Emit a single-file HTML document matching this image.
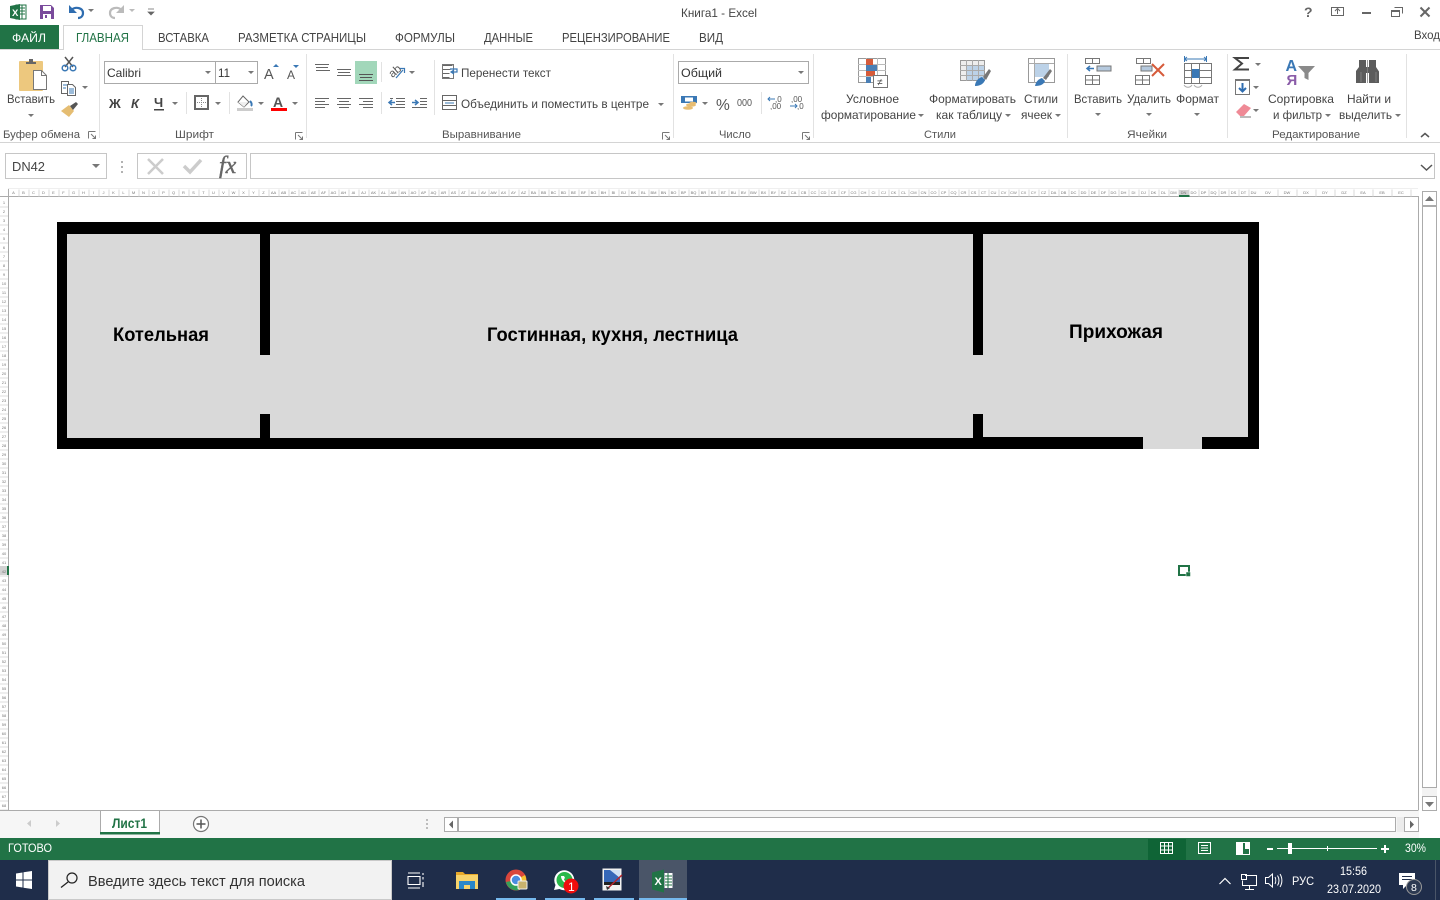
<!DOCTYPE html>
<html lang="ru"><head><meta charset="utf-8"><title>Книга1 - Excel</title>
<style>
html,body{margin:0;padding:0;width:1440px;height:900px;overflow:hidden;background:#fff}
svg{position:absolute;left:0;top:0}
text{font-family:"Liberation Sans","Noto Sans CJK SC",sans-serif;fill:#444;font-size:12px}
.t{font-size:12.5px}
.lab{font-size:11px;fill:#555}
.w{fill:#fff}
.flr{font-size:19px;font-weight:bold;fill:#000}
#cols,#rows{position:absolute;font:4px "Liberation Sans",sans-serif;color:#777}
#cols{left:8.5px;top:190px;display:flex;height:6px;line-height:6px}
#cols i{font-style:normal;width:10px;text-align:center;flex:none}
#cols u{text-decoration:none;text-align:center;flex:none;width:19px}
#rows{left:0;top:197.5px;width:8px;text-align:center}
#rows b{display:block;font-weight:normal;height:9px;line-height:9px}
</style></head><body>
<svg width="1440" height="900" viewBox="0 0 1440 900" xmlns="http://www.w3.org/2000/svg">
<defs><path id="c" d="M0 0h6l-3 3z" fill="#777"/>
<g id="l"><path d="M.5.5h7M.5.5v7M3 3l4.500 4.500M7.500 4.500v3h-3" fill="none" stroke="#777" stroke-width="1"/></g></defs>
<rect width="1440" height="900" fill="#fff"/>

<!-- QAT -->
<rect x="16" y="5" width="10" height="14" fill="#fff" stroke="#217346"/><path d="M20 8h5M20 11h5M20 14h5M22 5v14" stroke="#217346"/>
<path d="M10 6l10-2v16l-10-2z" fill="#217346"/><text x="12" y="16" style="font-size:9.500px;font-weight:bold;fill:#fff">X</text>
<path d="M40 5h11l3 3v11H40z" fill="#7a4b9c"/><rect x="43" y="6" width="8" height="5" fill="#fff"/><rect x="43" y="14" width="8" height="5" fill="#fff"/><rect x="45" y="15" width="2" height="3" fill="#7a4b9c"/>
<path d="M71 10c5-4 12-2 12 3 0 3-2 5-5 5" fill="none" stroke="#2f6db0" stroke-width="2.200"/><path d="M69 5v8h8z" fill="#2f6db0"/>
<use href="#c" x="88" y="9"/>
<path d="M122 10c-5-4-12-2-12 3 0 3 2 5 5 5" fill="none" stroke="#bbb" stroke-width="2.200"/><path d="M124 5v8h-8z" fill="#bbb"/>
<use href="#c" x="129" y="9" opacity=".5"/>
<path d="M148 9h6M148 12h6l-3 3z" fill="#666" stroke="#666" stroke-width=".7"/>
<text x="681" y="17" textLength="76" lengthAdjust="spacingAndGlyphs">Книга1 - Excel</text>
<text x="1304" y="17" style="font-size:14px;font-weight:bold;fill:#666">?</text>
<rect x="1331.500" y="7.500" width="12" height="8" fill="none" stroke="#666"/><path d="M1337.500 14V9.500M1335 11l2.500-2.500 2.500 2.500" fill="none" stroke="#666"/>
<rect x="1362" y="12" width="9" height="2" fill="#666"/>
<path d="M1394.500 7.500h8v6M1391.500 10.500h8v6h-8z" fill="none" stroke="#666"/><rect x="1391" y="10" width="9" height="2" fill="#666"/>
<path d="M1420.500 7.500l9 9M1429.500 7.500l-9 9" stroke="#666" stroke-width="2"/>

<!-- tabs -->
<rect x="0" y="25" width="59" height="25" fill="#217346"/>
<text class="w" x="12" y="42" textLength="34" lengthAdjust="spacingAndGlyphs" style="fill:#fff">ФАЙЛ</text>
<path d="M0 49.500H63.500V25.500H142.500V49.500H1440" fill="none" stroke="#d4d4d4"/>
<rect x="64" y="26" width="78" height="25" fill="#fff"/>
<text class="t" x="76" y="42" textLength="53" lengthAdjust="spacingAndGlyphs" style="fill:#217346">ГЛАВНАЯ</text>
<text class="t" x="158" y="42" textLength="51" lengthAdjust="spacingAndGlyphs">ВСТАВКА</text>
<text class="t" x="238" y="42" textLength="128" lengthAdjust="spacingAndGlyphs">РАЗМЕТКА СТРАНИЦЫ</text>
<text class="t" x="395" y="42" textLength="60" lengthAdjust="spacingAndGlyphs">ФОРМУЛЫ</text>
<text class="t" x="484" y="42" textLength="49" lengthAdjust="spacingAndGlyphs">ДАННЫЕ</text>
<text class="t" x="562" y="42" textLength="108" lengthAdjust="spacingAndGlyphs">РЕЦЕНЗИРОВАНИЕ</text>
<text class="t" x="699" y="42" textLength="24" lengthAdjust="spacingAndGlyphs">ВИД</text>
<text x="1414" y="39" textLength="26" lengthAdjust="spacingAndGlyphs">Вход</text>

<!-- ribbon frame -->
<path d="M0 142.500H1440" stroke="#d4d4d4"/>
<path d="M99.500 54V138M306.500 54V138M673.500 54V138M813.500 54V138M1067.500 54V138M1227.500 54V138M1406.500 54V138" stroke="#e2e2e2"/>
<path d="M186.500 92V114M229.500 92V114M381.500 62V82M381.500 92V114M434.500 60V115M761.500 92V114" stroke="#e2e2e2"/>

<!-- clipboard -->
<rect x="19" y="61" width="24" height="30" rx="1" fill="#edc87e"/>
<path d="M26 64v-2h3v-3h4v3h3v2z" fill="#666"/>
<path d="M33.500 70.500h8l5 5v14h-13z" fill="#fff" stroke="#777"/><path d="M41.500 70.500v5h5" fill="none" stroke="#777"/>
<text x="7" y="103" textLength="48" lengthAdjust="spacingAndGlyphs">Вставить</text><use href="#c" x="28" y="114"/>
<path d="M65 57l8 10M73 57l-8 10" stroke="#555" stroke-width="1.500"/>
<circle cx="65" cy="68" r="2.800" fill="none" stroke="#3a78b5" stroke-width="1.500"/><circle cx="73" cy="68" r="2.800" fill="none" stroke="#3a78b5" stroke-width="1.500"/>
<path d="M61.500 81.500h7v12h-7z" fill="#fff" stroke="#666"/><path d="M67.500 84.500h5l3 3v8h-8z" fill="#fff" stroke="#666"/><path d="M63 85h4M63 88h3M69 89h5M69 91h5M69 93h5" stroke="#3a78b5"/>
<use href="#c" x="82" y="86"/>
<path d="M61 111l8-6 5 6-5 6z" fill="#e5bd72"/><path d="M70 106l6-4 2 2-5 6z" fill="#555"/>
<text class="lab" x="3" y="138" textLength="77" lengthAdjust="spacingAndGlyphs">Буфер обмена</text><use href="#l" x="88" y="131"/>

<!-- font -->
<rect x="104.500" y="61.500" width="153" height="22" fill="#fff" stroke="#aaa"/><path d="M215.500 61V84" stroke="#aaa"/>
<text x="107" y="77" textLength="34" lengthAdjust="spacingAndGlyphs" style="fill:#333">Calibri</text><text x="218" y="77" textLength="12" lengthAdjust="spacingAndGlyphs" style="fill:#333">11</text>
<use href="#c" x="205" y="71"/><use href="#c" x="248" y="71"/>
<text x="264" y="79" style="font-size:14.500px;fill:#555">A</text><path d="M273 67h6l-3-3z" fill="#3a78b5"/>
<text x="287" y="79" style="font-size:12px;fill:#555">A</text><path d="M293 65h6l-3 3z" fill="#3a78b5"/>
<text x="109" y="108" style="font-weight:bold;font-size:13px;fill:#444">Ж</text>
<text x="131" y="108" style="font-weight:bold;font-style:italic;font-size:13px;fill:#444">К</text>
<text x="154" y="107" style="font-weight:bold;font-size:13px;fill:#444">Ч</text><rect x="154" y="109" width="10" height="1.500" fill="#444"/>
<use href="#c" x="172" y="102"/>
<rect x="195" y="96" width="13" height="13" fill="none" stroke="#666" stroke-width="2"/><path d="M201.500 98v9M197 102.500h9" stroke="#888" stroke-dasharray="1 1"/>
<use href="#c" x="215" y="102"/>
<path d="M243 96l6 6-5 5-6-5z" fill="#fff" stroke="#666"/><path d="M238 102h10l-4 5z" fill="#f0f0f0"/><path d="M250 101c2 2 2 4 1 5" stroke="#3a78b5" stroke-width="2" fill="none"/>
<rect x="237" y="108" width="16" height="3" fill="#ccc"/><use href="#c" x="258" y="102"/>
<text x="273" y="107" style="font-size:14px;font-weight:bold;fill:#555">A</text><rect x="271" y="108" width="16" height="3" fill="#f00"/><use href="#c" x="292" y="102"/>
<text class="lab" x="175" y="138" textLength="39" lengthAdjust="spacingAndGlyphs">Шрифт</text><use href="#l" x="295" y="132"/>

<!-- align -->
<rect x="355" y="61" width="22" height="23" fill="#a2d7ba"/>
<path d="M315 64.500h14M316 67.500h12M316 70.500h14M337 69.500h14M338 72.500h12M337 75.500h14" stroke="#666"/>
<path d="M359 74.500h14M360 77.500h12M359 80.500h14" stroke="#555"/>
<path d="M315 98.500h14M315 101.500h10M315 104.500h14M315 107.500h10M337 98.500h14M339 101.500h10M337 104.500h14M339 107.500h10M359 98.500h14M363 101.500h10M359 104.500h14M363 107.500h10" stroke="#666"/>
<text x="389" y="75" transform="rotate(-40 395 72)" style="font-size:11.500px;fill:#555">ab</text><path d="M396 78l7-8M400 68.500h4.500v4.500" stroke="#3a78b5" fill="none" stroke-width="1.200"/>
<use href="#c" x="409" y="71"/>
<path d="M396 98.500h9M396 101.500h9M396 104.500h9M390 107.500h15M390 98.500h3" stroke="#666"/><path d="M389 102.500h6M392 100l-3 2.500 3 2.500" fill="none" stroke="#3a78b5" stroke-width="1.500"/>
<path d="M420 98.500h7M420 101.500h7M420 104.500h7M412 107.500h15" stroke="#666"/><path d="M412 102.500h6M415 100l3 2.500-3 2.500" fill="none" stroke="#3a78b5" stroke-width="1.500"/>
<path d="M442.500 65.500h10M442.500 69.500h8M442.500 73.500h7M442.500 77.500h7" stroke="#666"/><rect x="442.500" y="64.500" width="11" height="14" fill="none" stroke="#777"/>
<path d="M450 69h7v3h-5M454 70l-3 2 3 2" fill="none" stroke="#3a78b5" stroke-width="1.200"/>
<text x="461" y="77" textLength="90" lengthAdjust="spacingAndGlyphs">Перенести текст</text>
<rect x="442.500" y="95.500" width="14" height="14" fill="none" stroke="#666"/><path d="M442 100.500h15M442 105.500h15" stroke="#666"/><path d="M445 103h9" stroke="#3a78b5"/>
<text x="461" y="108" textLength="188" lengthAdjust="spacingAndGlyphs">Объединить и поместить в центре</text><use href="#c" x="658" y="103"/>
<text class="lab" x="442" y="138" textLength="79" lengthAdjust="spacingAndGlyphs">Выравнивание</text><use href="#l" x="662" y="132"/>

<!-- number -->
<rect x="678.500" y="61.500" width="130" height="22" fill="#fff" stroke="#aaa"/>
<text x="681" y="77" textLength="41" lengthAdjust="spacingAndGlyphs" style="fill:#333">Общий</text><use href="#c" x="798" y="71"/>
<rect x="681" y="96" width="16" height="7" fill="#3a78b5"/><rect x="685" y="97.500" width="8" height="4" fill="#fff"/><ellipse cx="691" cy="105" rx="5" ry="1.700" fill="#e8bd72"/><ellipse cx="688" cy="108" rx="5" ry="1.700" fill="#e8bd72"/><ellipse cx="693" cy="103" rx="3.500" ry="1.300" fill="#e8bd72"/>
<use href="#c" x="702" y="102"/>
<text x="716" y="110" style="font-size:15.500px;fill:#555">%</text>
<text x="737" y="106" textLength="15" lengthAdjust="spacingAndGlyphs" style="font-size:10px;fill:#555">000</text>
<path d="M768 99h7M770 97l-2 2 2 2" fill="none" stroke="#3a78b5"/><text x="775" y="102" style="font-size:8px;fill:#555">,0</text><text x="770" y="109" style="font-size:8px;fill:#555">,00</text>
<path d="M790 106h7M795 104l2 2-2 2" fill="none" stroke="#3a78b5"/><text x="791" y="102" style="font-size:8px;fill:#555">,00</text><text x="797" y="109" style="font-size:8px;fill:#555">,0</text>
<text class="lab" x="719" y="138" textLength="32" lengthAdjust="spacingAndGlyphs">Число</text><use href="#l" x="802" y="132"/>

<!-- styles -->
<rect x="858.500" y="58.500" width="27" height="24" fill="#fff" stroke="#999"/><path d="M858 64.500h28M858 70.500h28M858 76.500h28M866.500 58v25M877.500 58v25" stroke="#bbb"/>
<rect x="866" y="59" width="7" height="6" fill="#d65b3a"/><rect x="866" y="65" width="11" height="6" fill="#4a7fb5"/><rect x="866" y="71" width="9" height="5" fill="#d65b3a"/><rect x="866" y="77" width="5" height="6" fill="#4a7fb5"/>
<rect x="873.500" y="75.500" width="14" height="12" fill="#fff" stroke="#777"/><text x="877" y="85.500" style="font-size:10px;fill:#444">≠</text>
<text x="846" y="103" textLength="53" lengthAdjust="spacingAndGlyphs">Условное</text>
<text x="821" y="119" textLength="95" lengthAdjust="spacingAndGlyphs">форматирование</text><use href="#c" x="918" y="114"/>
<rect x="960.500" y="60.500" width="24" height="20" fill="#eee" stroke="#999"/><rect x="966" y="66" width="18" height="14" fill="#bcd2e8"/><path d="M960 65.500h25M960 70.500h25M960 75.500h25M966.500 60v21M972.500 60v21M978.500 60v21" stroke="#aaa"/>
<path d="M975 85c1-5 4-7 7-8l3 3c-1 3-4 6-10 6z" fill="#3a78b5"/><path d="M983 77l6-8 2 2-5 9z" fill="#777"/>
<text x="929" y="103" textLength="87" lengthAdjust="spacingAndGlyphs">Форматировать</text>
<text x="936" y="119" textLength="66" lengthAdjust="spacingAndGlyphs">как таблицу</text><use href="#c" x="1005" y="114"/>
<rect x="1028.500" y="58.500" width="26" height="24" fill="#fff" stroke="#999"/><rect x="1034" y="64" width="15" height="13" fill="#bcd2e8"/><path d="M1028 63.500h26M1034.500 58v25" stroke="#aaa"/>
<path d="M1035 86c1-5 4-7 7-8l3 3c-1 3-4 5-10 5z" fill="#3a78b5"/><path d="M1043 78l7-9 2 2-6 9z" fill="#777"/>
<text x="1024" y="103" textLength="34" lengthAdjust="spacingAndGlyphs">Стили</text>
<text x="1021" y="119" textLength="31" lengthAdjust="spacingAndGlyphs">ячеек</text><use href="#c" x="1055" y="114"/>
<text class="lab" x="924" y="138" textLength="32" lengthAdjust="spacingAndGlyphs">Стили</text>

<!-- cells -->
<g fill="none" stroke="#777">
<path d="M1085.500 58.500h14v5h-14zM1092.500 58v6M1085.500 75.500h14v9h-14zM1092.500 75v10M1085 80h15"/>
<path d="M1136.500 58.500h14v5h-14zM1143.500 58v6M1135.500 75.500h14v9h-14zM1142.500 75v10M1135 80h15"/>
<path d="M1184.500 63.500h27v20h-27zM1184 70.500h28M1184 77.500h28M1191.500 63v21M1199.500 63v21"/>
<path d="M1184 85c2 3 6 3 8 0M1194 85c2 3 6 3 8 0" stroke="#aaa"/>
</g>
<rect x="1097" y="66" width="14" height="5" fill="#b5c9de" stroke="#777"/><path d="M1087 68.500h7M1090 66l-3 2.500 3 2.500" fill="none" stroke="#3a78b5" stroke-width="1.500"/>
<rect x="1141" y="66" width="11" height="5" fill="#b5c9de" stroke="#777"/><path d="M1152 64l12 12M1164 64l-12 12" stroke="#d65b3a" stroke-width="2"/>
<rect x="1192" y="69" width="7.500" height="9" fill="#3a78b5"/><path d="M1184.500 59h22M1187 57l-2.500 2 2.500 2M1204 57l2.500 2-2.500 2M1184.500 56v6M1206.500 56v6" fill="none" stroke="#3a78b5"/>
<text x="1074" y="103" textLength="48" lengthAdjust="spacingAndGlyphs">Вставить</text><use href="#c" x="1095" y="113"/>
<text x="1127" y="103" textLength="44" lengthAdjust="spacingAndGlyphs">Удалить</text><use href="#c" x="1146" y="113"/>
<text x="1176" y="103" textLength="43" lengthAdjust="spacingAndGlyphs">Формат</text><use href="#c" x="1194" y="113"/>
<text class="lab" x="1127" y="138" textLength="40" lengthAdjust="spacingAndGlyphs">Ячейки</text>

<!-- editing -->
<path d="M1249 58h-14l7 5.500-7 6h14" fill="none" stroke="#444" stroke-width="2"/><use href="#c" x="1255" y="63"/>
<rect x="1235.500" y="79.500" width="14" height="15" fill="#fff" stroke="#777"/><rect x="1235" y="79" width="15" height="2" fill="#777"/><path d="M1242.500 83v8M1239 88l3.500 3.500 3.500-3.500" fill="none" stroke="#2f6db0" stroke-width="2"/><use href="#c" x="1253" y="86"/>
<path d="M1236 112l8-8 7 4-7 8h-4z" fill="#ef8a96"/><path d="M1240 117h11" stroke="#777"/><use href="#c" x="1253" y="109"/>
<text x="1285.500" y="71" style="font-size:16px;font-weight:bold;fill:#3a78b5">A</text>
<text x="1286.500" y="85" style="font-size:15px;font-weight:bold;fill:#8a5ca8">Я</text>
<path d="M1298 66h17l-6.500 7v7l-4-2v-5z" fill="#8a8a8a"/>
<text x="1268" y="103" textLength="66" lengthAdjust="spacingAndGlyphs">Сортировка</text>
<text x="1273" y="119" textLength="49" lengthAdjust="spacingAndGlyphs">и фильтр</text><use href="#c" x="1325" y="114"/>
<path d="M1356 83V71l3-4v-7h7v7h3v-7h7v7l3 4.500V83h-10V73h-3v10z" fill="#5c5c5c"/><path d="M1367.500 83V60M1361 72v10M1376 72v10" stroke="#888" stroke-width=".8"/>
<text x="1347" y="103" textLength="44" lengthAdjust="spacingAndGlyphs">Найти и</text>
<text x="1339" y="119" textLength="53" lengthAdjust="spacingAndGlyphs">выделить</text><use href="#c" x="1395" y="114"/>
<text class="lab" x="1272" y="138" textLength="88" lengthAdjust="spacingAndGlyphs">Редактирование</text>
<path d="M1421 137l4-3.500 4 3.500" fill="none" stroke="#555" stroke-width="1.500"/>

<!-- formula bar -->
<rect x="5.500" y="153.500" width="101" height="25" fill="#fff" stroke="#c6c6c6"/>
<text x="12" y="171" textLength="33" lengthAdjust="spacingAndGlyphs" style="font-size:13px;fill:#444">DN42</text><path d="M92 164h8l-4 4z" fill="#777"/>
<path d="M122 161v2M122 166v2M122 171v2" stroke="#999" stroke-width="1.500"/>
<rect x="137.500" y="153.500" width="109" height="25" fill="#fff" stroke="#c6c6c6"/>
<path d="M148 159l15 15M163 159l-15 15" stroke="#ccc" stroke-width="2.500"/>
<path d="M184 166l6 6 11-12" fill="none" stroke="#ccc" stroke-width="3.500"/>
<text x="219" y="173" style='font-family:"Liberation Serif",serif;font-size:24px;font-style:italic;fill:#666;stroke:#666;stroke-width:.4'>fx</text>
<rect x="250.500" y="153.500" width="1184" height="25" fill="#fff" stroke="#c6c6c6"/>
<path d="M1421 165l5.500 5 5.500-5" fill="none" stroke="#555" stroke-width="1.500"/>

<!-- sheet headers -->
<path d="M0 196.500H1418.500V810.500M8.500 189V810.500" fill="none" stroke="#ababab"/>
<path d="M8 188.500H1418" stroke="#efefef"/>
<path d="M18.500 193H1258" stroke="#d8d8d8" stroke-width="7" stroke-dasharray="1 9"/>
<path d="M1277.500 193H1420" stroke="#d8d8d8" stroke-width="7" stroke-dasharray="1 18"/>
<path d="M4 206.500V810" stroke="#dcdcdc" stroke-width="8" stroke-dasharray="1 8"/>
<rect x="1179" y="190" width="10" height="6" fill="#d2d2d2"/><rect x="1179" y="195" width="10.500" height="2" fill="#217346"/>
<rect x="0" y="566" width="8" height="9" fill="#d2d2d2"/><rect x="7" y="566" width="2" height="9" fill="#217346"/>

<!-- plan -->
<rect x="57" y="222" width="1202" height="227" fill="#000"/>
<rect x="67" y="234" width="193" height="204" fill="#d9d9d9"/>
<rect x="270" y="234" width="703" height="204" fill="#d9d9d9"/>
<rect x="983" y="234" width="265" height="203" fill="#d9d9d9"/>
<rect x="260" y="355" width="10" height="59" fill="#d9d9d9"/>
<rect x="973" y="355" width="10" height="59" fill="#d9d9d9"/>
<rect x="1143" y="437" width="59" height="12" fill="#d9d9d9"/>
<text class="flr" x="113" y="341" textLength="96" lengthAdjust="spacingAndGlyphs">Котельная</text>
<text class="flr" x="487" y="341" textLength="251" lengthAdjust="spacingAndGlyphs">Гостинная, кухня, лестница</text>
<text class="flr" x="1069" y="338" textLength="94" lengthAdjust="spacingAndGlyphs">Прихожая</text>
<rect x="1179" y="566" width="10" height="9" fill="#fff" stroke="#217346" stroke-width="2"/><rect x="1186" y="572" width="4.500" height="4.500" fill="#217346" stroke="#fff" stroke-width=".5"/>

<!-- v scroll -->
<rect x="1419" y="189" width="21" height="621" fill="#fff"/>
<rect x="1422.500" y="191.500" width="14" height="14" fill="#fff" stroke="#ababab"/><path d="M1425 201h9l-4.500-5z" fill="#777"/>
<rect x="1422" y="206" width="15" height="590" fill="#f3f3f3"/>
<rect x="1422.500" y="206.500" width="14" height="581" fill="#fff" stroke="#ababab"/>
<rect x="1422.500" y="796.500" width="14" height="14" fill="#fff" stroke="#ababab"/><path d="M1425 802h9l-4.500 5z" fill="#777"/>

<!-- tab strip -->
<rect x="0" y="811" width="1440" height="27" fill="#f6f6f6"/>
<rect x="1419" y="811" width="21" height="27" fill="#fff"/>
<path d="M0 810.500H1418" stroke="#ababab"/>
<path d="M100.500 834V810.500H159.500V834" fill="#fff" stroke="#ababab"/>
<rect x="100" y="832" width="60" height="2.500" fill="#217346"/>
<text x="112" y="828" textLength="35" lengthAdjust="spacingAndGlyphs" style="font-size:13.500px;font-weight:bold;fill:#217346" transform="skewX(0)">Лист1</text>
<path d="M31 820v7l-4-3.500zM56 820v7l4-3.500z" fill="#ccc"/>
<circle cx="201" cy="824" r="7.500" fill="#fff" stroke="#777" stroke-width="1.200"/><path d="M196.500 824h9M201 819.500v9" stroke="#555" stroke-width="1.500"/>
<path d="M427 819v2M427 823v2M427 827v2" stroke="#aaa" stroke-width="1.500"/>
<rect x="444.500" y="817.500" width="13" height="14" fill="#fff" stroke="#ababab"/><path d="M453 820.500v8l-4-4z" fill="#666"/>
<rect x="458.500" y="817.500" width="937" height="14" fill="#fff" stroke="#ababab"/>
<rect x="1397" y="817" width="7" height="15" fill="#ececec"/>
<rect x="1404.500" y="817.500" width="14" height="14" fill="#fff" stroke="#ababab"/><path d="M1410 820.500v8l4-4z" fill="#666"/>

<!-- status bar -->
<rect x="0" y="838" width="1440" height="22" fill="#217346"/>
<text x="8" y="852" textLength="44" lengthAdjust="spacingAndGlyphs" style="fill:#fff">ГОТОВО</text>
<rect x="1148" y="839" width="38" height="21" fill="#0f6436"/>
<path d="M1160.500 842.500h12v11h-12zM1160 846h13M1160 850h13M1164.500 842v12M1168.500 842v12" fill="none" stroke="#fff"/>
<rect x="1198.500" y="842.500" width="12" height="11" fill="none" stroke="#fff"/><path d="M1201 845.500h7M1201 848h7M1201 850.500h7" stroke="#fff"/>
<rect x="1236.500" y="842.500" width="13" height="12" fill="none" stroke="#fff"/><rect x="1237" y="843" width="6" height="11" fill="#fff"/><rect x="1245" y="843" width="4" height="6" fill="#fff"/>
<rect x="1267" y="848" width="6" height="2" fill="#fff"/><path d="M1277 848.500h100" stroke="#fff"/><rect x="1288" y="843" width="4" height="11" fill="#fff"/><path d="M1327.500 846v5" stroke="#fff"/>
<path d="M1381 849h8M1385 845v8" stroke="#fff" stroke-width="2"/>
<text x="1405" y="852" textLength="21" lengthAdjust="spacingAndGlyphs" style="font-size:11.500px;fill:#fff">30%</text>

<!-- taskbar -->
<rect x="0" y="860" width="1440" height="40" fill="#1f2d4a"/>
<path d="M16 873.500l6.500-1v7H16zM23.500 872.300l8.500-1.300v8.500h-8.500zM16 880.500h6.500v7l-6.500-1zM23.500 880.500H32V889l-8.500-1.300z" fill="#fff"/>
<rect x="48.500" y="860.500" width="343" height="39" fill="#f2f2f2" stroke="#c9c9c9"/>
<circle cx="72" cy="878" r="5" fill="none" stroke="#222" stroke-width="1.200"/><path d="M68 882l-7 5.500" stroke="#222" stroke-width="1.300"/>
<text x="88" y="886" textLength="217" lengthAdjust="spacingAndGlyphs" style="font-size:14.500px;fill:#333">Введите здесь текст для поиска</text>
<path d="M408 873h12M408 876.500h12v8h-12zM408 888h12M423 873v2M423 877v2.500M423 882v5" fill="none" stroke="#fff" stroke-width="1.100"/>
<path d="M456 872h7l2 2h13v6h-22z" fill="#e8a92a"/><rect x="456" y="875" width="22" height="14" fill="#f7d36b"/><rect x="459" y="881" width="16" height="8" fill="#2a87c9"/><rect x="464" y="885" width="6" height="4" fill="#f7d36b"/>
<rect x="496" y="898" width="40" height="2" fill="#76b9ed"/><rect x="545" y="898" width="40" height="2" fill="#76b9ed"/><rect x="594" y="898" width="40" height="2" fill="#76b9ed"/>
<circle cx="516" cy="880" r="10.500" fill="#d9463c"/><path d="M516 880l9-5a10.500 10.500 0 0 1-6 15z" fill="#f5c331"/><path d="M516 880l3 10a10.500 10.500 0 0 1-13-8z" fill="#34a05a"/><circle cx="516" cy="880" r="5" fill="#4a8ce0" stroke="#fff" stroke-width="1.500"/><rect x="518" y="881" width="9" height="8" rx="1" fill="#c9b26e" stroke="#eee"/>
<path d="M554 890l1.500-5a10 10 0 1 1 4 4z" fill="#fff"/><circle cx="564.500" cy="880" r="8" fill="#2ab84a"/><path d="M561 876c0 4 3 7 7 8l1-2-2-1-1 1c-1-1-2-2-2-3l1-1-1-2z" fill="#fff"/><circle cx="571" cy="886" r="7.500" fill="#f00d0d"/><text x="568" y="891" style="font-size:12px;fill:#fff">1</text>
<rect x="602.500" y="868.500" width="19" height="22" fill="#f2f2f2"/><rect x="604" y="870" width="16" height="13" fill="#3567b8"/><path d="M610 870h10v8z" fill="#cfe0f3"/><rect x="604" y="882" width="16" height="3" fill="#222"/><path d="M607 889l15-14" stroke="#b5232a" stroke-width="1.500"/><path d="M606 886l4 2-3 2z" fill="#333"/>
<rect x="639" y="860" width="48" height="40" fill="#4a5568"/><rect x="639" y="898" width="48" height="2" fill="#76b9ed"/>
<rect x="664.500" y="873" width="8" height="15" fill="#fff"/><path d="M665 876h7M665 879h7M665 882h7M665 885h7M668 873v15" stroke="#217346"/>
<path d="M652 872.500l12-3v23l-12-3z" fill="#217346"/><text x="654.500" y="885" style="font-size:11px;font-weight:bold;fill:#fff">X</text>
<!-- tray -->
<path d="M1219.500 884l5.500-5.500 5.500 5.500" fill="none" stroke="#fff" stroke-width="1.200"/>
<path d="M1245 875.500h11.500v10h-14v-5M1249.500 886v3M1245 889.500h9M1241.500 874.500h5v5h-5z" fill="none" stroke="#fff" stroke-width="1"/>
<path d="M1265.500 877.500h3l4-3.500v13l-4-3.500h-3zM1275 877c1 2 1 5 0 7M1277.500 875.500c2 3 2 7 0 10M1280 874c2.500 4 2.500 9 0 13" fill="none" stroke="#fff"/>
<text x="1292" y="885" textLength="22" lengthAdjust="spacingAndGlyphs" style="fill:#fff">РУС</text>
<text x="1340" y="875" textLength="27" lengthAdjust="spacingAndGlyphs" style="fill:#fff">15:56</text>
<text x="1327" y="893" textLength="54" lengthAdjust="spacingAndGlyphs" style="fill:#fff">23.07.2020</text>
<path d="M1399 873h16v12h-8l-4 4v-4h-4z" fill="#fff"/><path d="M1402 876.500h10M1402 879.500h10" stroke="#1f2d4a"/>
<circle cx="1414" cy="887" r="7.500" fill="#2d3a52" stroke="#999"/><text x="1411" y="891" style="font-size:10.500px;fill:#fff">8</text>
<path d="M1435.500 860v40" stroke="#4a5568"/>
</svg>
<div id="cols"><i>A</i><i>B</i><i>C</i><i>D</i><i>E</i><i>F</i><i>G</i><i>H</i><i>I</i><i>J</i><i>K</i><i>L</i><i>M</i><i>N</i><i>O</i><i>P</i><i>Q</i><i>R</i><i>S</i><i>T</i><i>U</i><i>V</i><i>W</i><i>X</i><i>Y</i><i>Z</i><i>AA</i><i>AB</i><i>AC</i><i>AD</i><i>AE</i><i>AF</i><i>AG</i><i>AH</i><i>AI</i><i>AJ</i><i>AK</i><i>AL</i><i>AM</i><i>AN</i><i>AO</i><i>AP</i><i>AQ</i><i>AR</i><i>AS</i><i>AT</i><i>AU</i><i>AV</i><i>AW</i><i>AX</i><i>AY</i><i>AZ</i><i>BA</i><i>BB</i><i>BC</i><i>BD</i><i>BE</i><i>BF</i><i>BG</i><i>BH</i><i>BI</i><i>BJ</i><i>BK</i><i>BL</i><i>BM</i><i>BN</i><i>BO</i><i>BP</i><i>BQ</i><i>BR</i><i>BS</i><i>BT</i><i>BU</i><i>BV</i><i>BW</i><i>BX</i><i>BY</i><i>BZ</i><i>CA</i><i>CB</i><i>CC</i><i>CD</i><i>CE</i><i>CF</i><i>CG</i><i>CH</i><i>CI</i><i>CJ</i><i>CK</i><i>CL</i><i>CM</i><i>CN</i><i>CO</i><i>CP</i><i>CQ</i><i>CR</i><i>CS</i><i>CT</i><i>CU</i><i>CV</i><i>CW</i><i>CX</i><i>CY</i><i>CZ</i><i>DA</i><i>DB</i><i>DC</i><i>DD</i><i>DE</i><i>DF</i><i>DG</i><i>DH</i><i>DI</i><i>DJ</i><i>DK</i><i>DL</i><i>DM</i><i>DN</i><i>DO</i><i>DP</i><i>DQ</i><i>DR</i><i>DS</i><i>DT</i><i>DU</i><u>DV</u><u>DW</u><u>DX</u><u>DY</u><u>DZ</u><u>EA</u><u>EB</u><u>EC</u></div>
<div id="rows"><b>1</b><b>2</b><b>3</b><b>4</b><b>5</b><b>6</b><b>7</b><b>8</b><b>9</b><b>10</b><b>11</b><b>12</b><b>13</b><b>14</b><b>15</b><b>16</b><b>17</b><b>18</b><b>19</b><b>20</b><b>21</b><b>22</b><b>23</b><b>24</b><b>25</b><b>26</b><b>27</b><b>28</b><b>29</b><b>30</b><b>31</b><b>32</b><b>33</b><b>34</b><b>35</b><b>36</b><b>37</b><b>38</b><b>39</b><b>40</b><b>41</b><b>42</b><b>43</b><b>44</b><b>45</b><b>46</b><b>47</b><b>48</b><b>49</b><b>50</b><b>51</b><b>52</b><b>53</b><b>54</b><b>55</b><b>56</b><b>57</b><b>58</b><b>59</b><b>60</b><b>61</b><b>62</b><b>63</b><b>64</b><b>65</b><b>66</b><b>67</b><b>68</b></div>
</body></html>
